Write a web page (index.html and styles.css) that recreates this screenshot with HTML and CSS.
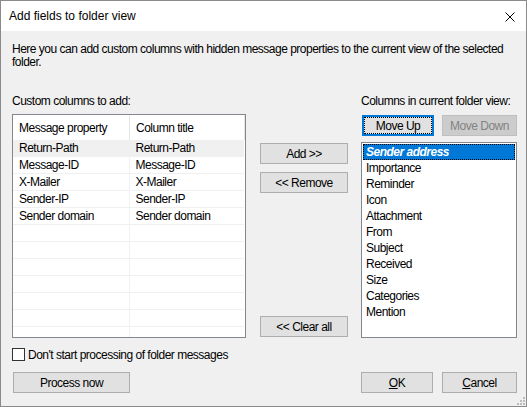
FILE: index.html
```html
<!DOCTYPE html>
<html>
<head>
<meta charset="utf-8">
<link rel="stylesheet" href="styles.css">
</head>
<body>
<div class="window">
  <div class="titlebar">
    <span class="title">Add fields to folder view</span>
    <svg class="close" width="10" height="10" viewBox="0 0 10 10"><path d="M0.5 0.5 L9.5 9.5 M9.5 0.5 L0.5 9.5" stroke="#000" stroke-width="1" fill="none"/></svg>
  </div>
  <div class="content">
    <p class="desc">Here you can add custom columns with hidden message properties to the current view of the selected<br>folder.</p>
    <div class="main">
      <div class="col-left">
        <div class="label">Custom columns to add:</div>
        <div class="grid">
          <div class="grid-head"><div class="c1">Message property</div><div class="c2">Column title</div></div>
          <div class="grid-row sel"><div class="c1">Return-Path</div><div class="c2">Return-Path</div></div>
          <div class="grid-row"><div class="c1">Message-ID</div><div class="c2">Message-ID</div></div>
          <div class="grid-row"><div class="c1">X-Mailer</div><div class="c2">X-Mailer</div></div>
          <div class="grid-row"><div class="c1">Sender-IP</div><div class="c2">Sender-IP</div></div>
          <div class="grid-row"><div class="c1">Sender domain</div><div class="c2">Sender domain</div></div>
          <div class="grid-row"><div class="c1"></div><div class="c2"></div></div>
          <div class="grid-row"><div class="c1"></div><div class="c2"></div></div>
          <div class="grid-row"><div class="c1"></div><div class="c2"></div></div>
          <div class="grid-row"><div class="c1"></div><div class="c2"></div></div>
          <div class="grid-row"><div class="c1"></div><div class="c2"></div></div>
          <div class="grid-row"><div class="c1"></div><div class="c2"></div></div>
          <div class="grid-row"><div class="c1"></div><div class="c2"></div></div>
        </div>
      </div>
      <div class="col-mid">
        <button class="btn btn-add">Add &gt;&gt;</button>
        <button class="btn btn-remove">&lt;&lt; Remove</button>
        <button class="btn btn-clear">&lt;&lt; Clear all</button>
      </div>
      <div class="col-right">
        <div class="label label-right">Columns in current folder view:</div>
        <div class="btnrow">
          <button class="btn btn-up focused"><span class="focusrect">Move Up</span></button>
          <button class="btn btn-down" disabled>Move Down</button>
        </div>
        <div class="listbox">
          <div class="item selected">Sender address</div>
          <div class="item">Importance</div>
          <div class="item">Reminder</div>
          <div class="item">Icon</div>
          <div class="item">Attachment</div>
          <div class="item">From</div>
          <div class="item">Subject</div>
          <div class="item">Received</div>
          <div class="item">Size</div>
          <div class="item">Categories</div>
          <div class="item">Mention</div>
        </div>
      </div>
    </div>
    <div class="check"><span class="box"></span><span>Don't start processing of folder messages</span></div>
    <div class="bottom">
      <button class="btn btn-process">Process now</button>
      <div class="spacer"></div>
      <button class="btn btn-ok"><u>O</u>K</button>
      <button class="btn btn-cancel"><u>C</u>ancel</button>
    </div>
  </div>
  <svg class="grip" width="9" height="9" viewBox="0 0 9 9">
    <rect x="7" y="1" width="2" height="2" fill="#bcbcbc"/>
    <rect x="4" y="4" width="2" height="2" fill="#bcbcbc"/>
    <rect x="7" y="4" width="2" height="2" fill="#bcbcbc"/>
    <rect x="1" y="7" width="2" height="2" fill="#bcbcbc"/>
    <rect x="4" y="7" width="2" height="2" fill="#bcbcbc"/>
    <rect x="7" y="7" width="2" height="2" fill="#bcbcbc"/>
  </svg>
</div>
</body>
</html>
```

FILE: styles.css
```css
html, body {
  margin: 0;
  padding: 0;
  background: #f0f0f0;
}

.window {
  position: relative;
  width: 527px;
  height: 407px;
  box-sizing: border-box;
  border: 1px solid #8a8a8a;
  display: flex;
  flex-direction: column;
  font-family: "Liberation Sans", Arial, sans-serif;
  font-size: 12px;
  color: #000;
}

.titlebar {
  height: 30px;
  background: #fff;
  display: flex;
  align-items: center;
  padding-left: 8px;
}

.title {
  font-size: 12px;
}

.close {
  margin-left: auto;
  margin-right: 11px;
  margin-top: 1px;
}

.content {
  flex: 1;
  background: #f0f0f0;
  padding: 0 9px 0 11px;
  letter-spacing: -0.5px;
}

.desc {
  margin: 12px 0 0;
  line-height: 13px;
}

.main {
  margin-top: 25px;
  display: flex;
}

.label {
  line-height: 14px;
  height: 14px;
  white-space: nowrap;
}

.label-right {
  text-align: right;
  padding-right: 9px;
}

.col-left {
  width: 234px;
}

.grid {
  margin-top: 6px;
  height: 224px;
  box-sizing: border-box;
  border: 1px solid #828790;
  background: #fff;
  overflow: hidden;
}

.grid-head {
  display: flex;
  height: 25px;
  align-items: stretch;
}

.grid-head .c1,
.grid-head .c2 {
  display: flex;
  align-items: center;
  border-right: 1px solid #e5e5e5;
}

.c1 {
  width: 117px;
  box-sizing: border-box;
  padding-left: 6px;
  white-space: nowrap;
}

.c2 {
  width: 115px;
  box-sizing: border-box;
  padding-left: 6px;
  white-space: nowrap;
}

.grid-row {
  display: flex;
  height: 17px;
  box-sizing: border-box;
  border-bottom: 1px solid #f0f0f0;
  width: 231px;
  line-height: 16px;
}

.grid-row .c1 {
  border-right: 1px solid #f0f0f0;
}

.grid-row.sel {
  background: #f0f0f0;
}

.col-mid {
  width: 88px;
  margin-left: 14px;
  display: flex;
  flex-direction: column;
}

.btn {
  font-family: "Liberation Sans", Arial, sans-serif;
  font-size: 12px;
  letter-spacing: -0.5px;
  color: #000;
  background: #e1e1e1;
  border: 1px solid #adadad;
  height: 21px;
  padding: 0;
  margin: 0;
  box-sizing: border-box;
}

.btn-add {
  margin-top: 49px;
}

.btn-remove {
  margin-top: 8px;
}

.btn-clear {
  margin-top: auto;
  margin-bottom: 1px;
}

.col-right {
  width: 156px;
  margin-left: 13px;
  display: flex;
  flex-direction: column;
}

.btnrow {
  margin-top: 7px;
  display: flex;
  padding-left: 1px;
  gap: 8px;
}

.btn-up {
  width: 72px;
  border: 2px solid #0078d7;
  padding: 0;
  display: flex;
}

.focusrect {
  flex: 1;
  border: 1px dotted #000;
  display: flex;
  align-items: center;
  justify-content: center;
}

.btn-down {
  width: 75px;
  background: #cccccc;
  border-color: #bfbfbf;
  color: #838383;
}

.listbox {
  margin-top: 6px;
  height: 196px;
  box-sizing: border-box;
  border: 1px solid #828790;
  background: #fff;
  padding: 1px;
}

.item {
  height: 16px;
  line-height: 16px;
  padding-left: 3px;
  white-space: nowrap;
}

.item.selected {
  background: #0078d7;
  color: #fff;
  font-weight: bold;
  font-style: italic;
  outline: 1px dotted #000;
  outline-offset: -1px;
}

.check {
  margin-top: 10px;
  display: flex;
  align-items: center;
  height: 13px;
}

.box {
  width: 13px;
  height: 13px;
  box-sizing: border-box;
  border: 1px solid #333;
  background: #fff;
  margin-right: 3px;
}

.bottom {
  margin-top: 11px;
  display: flex;
}

.btn-process {
  width: 117px;
  margin-left: 1px;
}

.spacer {
  flex: 1;
}

.btn-ok {
  width: 72px;
}

.btn-cancel {
  width: 75px;
  margin-left: 9px;
}

.btn u {
  text-decoration: underline;
}

.grip {
  position: absolute;
  right: 1px;
  bottom: 1px;
}
```
